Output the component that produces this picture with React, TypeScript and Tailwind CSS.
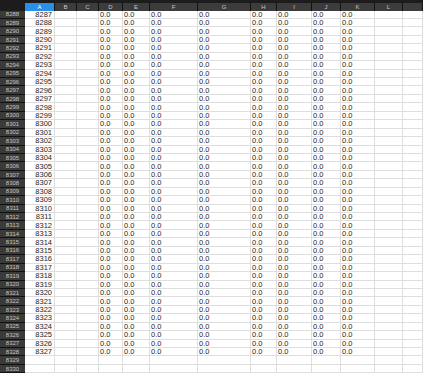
const cols = ["A", "B", "C", "D", "E", "F", "G", "H", "I", "J", "K", "L", ""];
const zeroCols = ["D", "E", "F", "G", "H", "I", "J", "K"];

const grid =
  "grid grid-cols-[25px_30px_22px_22px_24px_27px_48px_53px_26px_35px_29px_34px_28px_20px]";

const rows = Array.from({ length: 43 }, (_, i) => 8288 + i);

export default function App() {
  return (
    <div
      className="h-[375px] w-[423px] overflow-hidden bg-white"
      style={{ fontFamily: '"Liberation Sans", Arial, sans-serif' }}
    >
      <div className="h-[3px] bg-[#1c1c1c]" />
      <div className={`${grid} h-[7.5px] bg-[#1c1c1c]`}>
        <div className="bg-[#1c1c1c]" />
        {cols.map((c, i) => (
          <div
            key={i}
            className={`flex items-center justify-center border-r border-[#111] text-[6px] leading-none ${
              c === "A" ? "bg-[#2a8fe8] text-white" : "bg-[#3c3c3c] text-[#c8c8c8]"
            }`}
          >
            {c}
          </div>
        ))}
      </div>
      {rows.map((r) => {
        const filled = r <= 8328;
        return (
          <div key={r} className={`${grid} h-[8.45px]`}>
            <div className="flex items-center justify-center border-b border-[#111] bg-[#3a3a3a] text-[6px] leading-none text-[#c4c4c4]">
              {r}
            </div>
            {cols.map((c, i) => (
              <div
                key={i}
                className={`flex items-center whitespace-nowrap border-r border-b border-[#dedede] text-[7.5px] leading-[7px] text-[#1e1e1e] ${
                  c === "A" ? "justify-end pr-[2px]" : "justify-start pl-[1px]"
                }`}
              >
                {filled && c === "A" ? r - 1 : null}
                {filled && zeroCols.includes(c) ? "0.0" : null}
              </div>
            ))}
          </div>
        );
      })}
    </div>
  );
}
